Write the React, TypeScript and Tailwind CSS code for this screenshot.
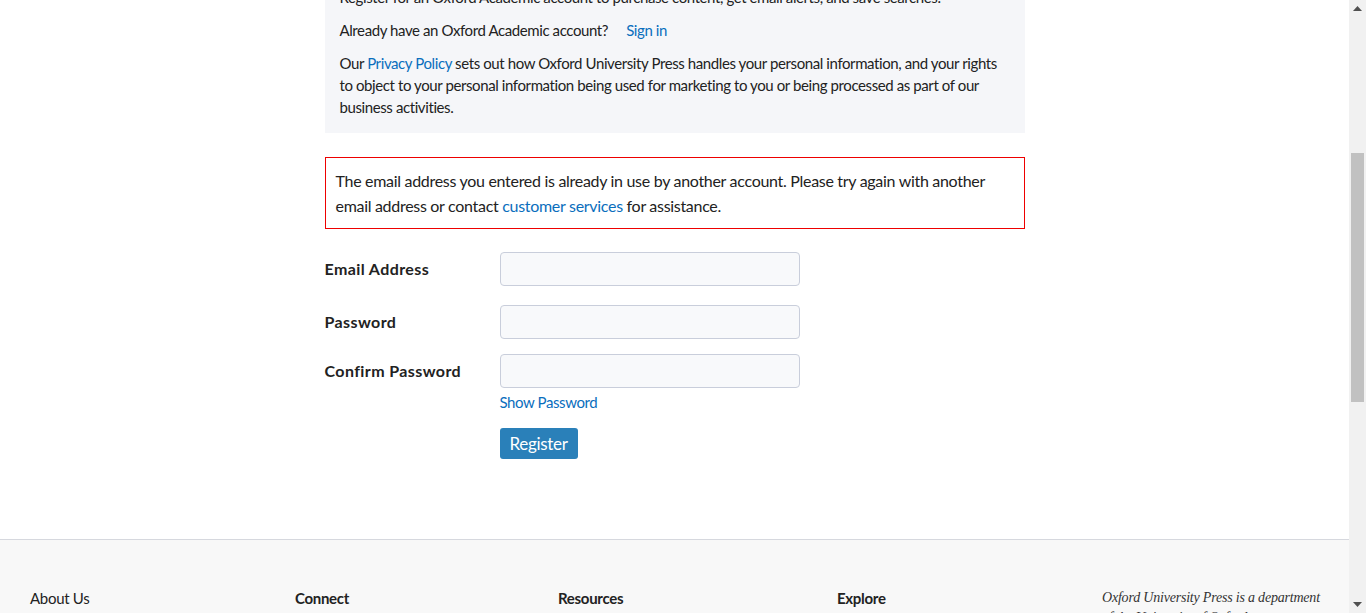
import React from 'react';

const sans = "font-['Lato','Noto_Sans',sans-serif]";

function Field({ label, id, type = 'text' }: { label: string; id: string; type?: string }) {
    return (
        <div className="flex items-center">
            <label htmlFor={id} className="w-[175px] text-[16px] font-bold tracking-[0.4px] text-[#222]">{label}</label>
            <input
                id={id}
                type={type}
                className="w-[300px] h-[34px] rounded-[4px] border border-[#c9cedb] bg-[#f8f9fb] px-2 outline-none"
            />
        </div>
    );
}

function Scrollbar() {
    return (
        <div className="w-[17px] h-[613px] bg-[#f1f1f1] flex flex-col items-center shrink-0">
            <div className="h-[17px] flex items-center justify-center">
                <svg width="9" height="5" viewBox="0 0 9 5"><path d="M4.5 0 L9 5 L0 5 Z" fill="#505050" /></svg>
            </div>
            <div className="h-[136px]" />
            <div className="w-[13px] h-[249px] bg-[#c1c1c1]" />
            <div className="flex-1" />
            <div className="h-[17px] flex items-center justify-center">
                <svg width="9" height="5" viewBox="0 0 9 5"><path d="M0 0 L9 0 L4.5 5 Z" fill="#505050" /></svg>
            </div>
        </div>
    );
}

export default function App() {
    return (
        <div className={`flex h-[613px] overflow-hidden bg-white ${sans} text-[#222]`}>
            <div className="w-[1349px] flex flex-col">
                <div className="w-[700px] mx-auto mt-[-14px] tracking-[-0.4px]">
                    {/* account info panel */}
                    <div className="bg-[#f5f6f9] px-[15px] pb-[15px] text-[15px] leading-[22px] flex flex-col gap-[11px]">
                        <p>Register for an Oxford Academic account to purchase content, get email alerts, and save searches.</p>
                        <p>
                            Already have an Oxford Academic account?
                            <a href="#" className="ml-[18px] text-[#0a6ebd]">Sign in</a>
                        </p>
                        <p>
                            Our <a href="#" className="text-[#0a6ebd]">Privacy Policy</a> sets out how Oxford University Press handles your personal information, and your rights to object to your personal information being used for marketing to you or being processed as part of our business activities.
                        </p>
                    </div>

                    {/* error */}
                    <div className="mt-[24px] border border-[#e00] px-[10px] py-[10px] text-[16px] leading-[25px] tracking-[-0.3px]">
                        The email address you entered is already in use by another account. Please try again with another email address or contact{' '}
                        <a href="#" className="text-[#0a6ebd]">customer services</a> for assistance.
                    </div>

                    {/* form */}
                    <form className="mt-[23px] flex flex-col">
                        <Field label="Email Address" id="email" type="email" />
                        <div className="mt-[19px]"><Field label="Password" id="pw" type="password" /></div>
                        <div className="mt-[15px]"><Field label="Confirm Password" id="pw2" type="password" /></div>
                        <div className="ml-[175px] mt-[3px] text-[15px] leading-[22px]">
                            <a href="#" className="text-[#0a6ebd]">Show Password</a>
                        </div>
                        <div className="ml-[175px] mt-[15px]">
                            <button type="button" className="h-[31px] px-[10px] rounded-[3px] bg-[#2a80b9] text-white text-[17px] tracking-[-0.3px]">Register</button>
                        </div>
                    </form>
                </div>

                {/* footer */}
                <footer className="mt-[80px] flex-1 border-t border-[#d6d8de] bg-[#f8f8f8]">
                    <div className="flex pt-[48px] text-[15px] leading-[20px] tracking-[-0.3px]">
                        <div className="w-[295px] pl-[30px]"><a href="#">About Us</a></div>
                        <div className="w-[263px] font-bold">Connect</div>
                        <div className="w-[279px] font-bold">Resources</div>
                        <div className="w-[265px] font-bold">Explore</div>
                        <div className="w-[224px] italic text-[14px] tracking-[-0.2px] font-['Liberation_Serif',serif] text-[#333]">Oxford University Press is a department of the University of Oxford.</div>
                    </div>
                </footer>
            </div>
            <Scrollbar />
        </div>
    );
}
